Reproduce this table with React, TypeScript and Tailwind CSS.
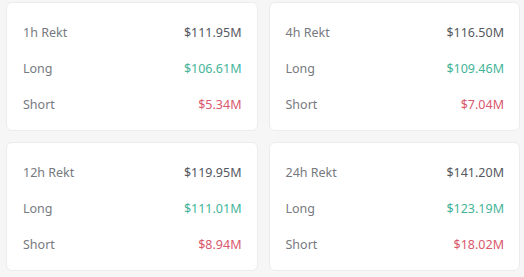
const stats = [
  { period: "1h Rekt", total: "$111.95M", long: "$106.61M", short: "$5.34M" },
  { period: "4h Rekt", total: "$116.50M", long: "$109.46M", short: "$7.04M" },
  { period: "12h Rekt", total: "$119.95M", long: "$111.01M", short: "$8.94M" },
  { period: "24h Rekt", total: "$141.20M", long: "$123.19M", short: "$18.02M" },
];

function RektCard({ item }: { item: (typeof stats)[number] }) {
  return (
    <div className="bg-white border border-[#ececec] rounded-md pl-4 pr-[15px] pt-3 pb-[7px]">
      <div className="flex justify-between items-center h-9">
        <span className="text-[#777a80]">{item.period}</span>
        <span className="text-[#55585e]">{item.total}</span>
      </div>
      <div className="flex justify-between items-center h-9">
        <span className="text-[#777a80]">Long</span>
        <span className="text-[#45b49a]">{item.long}</span>
      </div>
      <div className="flex justify-between items-center h-9">
        <span className="text-[#777a80]">Short</span>
        <span className="text-[#d9586e]">{item.short}</span>
      </div>
    </div>
  );
}

export default function App() {
  return (
    <div
      className="w-[524px] h-[277px] bg-[#f6f6f6] pl-[6px] pr-[4px] pt-[2px] text-[12.5px]"
      style={{ fontFamily: '"Noto Sans", "Open Sans", sans-serif' }}
    >
      <div className="grid grid-cols-2 gap-x-[11px] gap-y-[11px]">
        {stats.map((s) => (
          <RektCard key={s.period} item={s} />
        ))}
      </div>
    </div>
  );
}
